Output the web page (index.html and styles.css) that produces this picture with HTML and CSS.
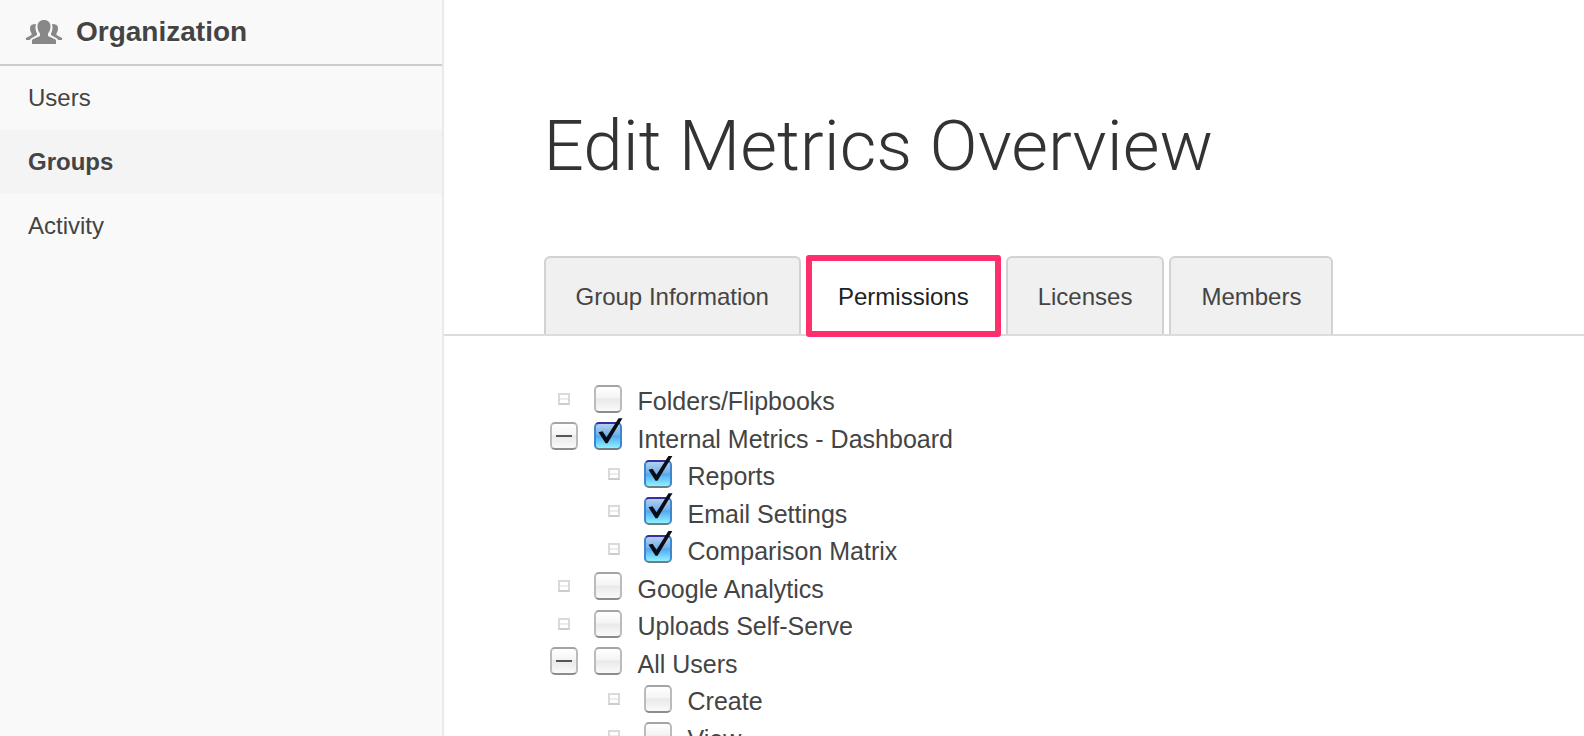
FILE: index.html
```html
<!DOCTYPE html>
<html lang="en">
<head>
    <meta charset="UTF-8">
    <meta name="viewport" content="width=device-width, initial-scale=1.0">
    <title>Edit Metrics Overview</title>
    <link rel="stylesheet" href="styles.css">
</head>
<body>
    <div class="layout">
        <!-- Sidebar -->
        <aside class="sidebar">
            <h2 class="sidebar-title">
                <svg class="sidebar-icon" viewBox="0 0 36 24" aria-hidden="true">
                    <path d="M18 0c4 0 6.500 2.600 6.500 6.500 0 3.500-1.300 5.500-2.500 7v2.500l7 3.200c.7.400 1 .9 1 1.800v3H6v-3c0-.9.300-1.400 1-1.800l7-3.200v-2.500c-1.200-1.500-2.500-3.500-2.500-7C11.500 2.600 14 0 18 0z"/>
                    <path d="M10 4c-1 3-.6 6.500 1 9.500v1.500L5 18.500l-1.500 1.500H0v-2L5.500 15v-2C4.500 12 4 10.500 4 8c0-2.600 2-4 6-4z"/>
                    <path d="M26 4c1 3 .6 6.500-1 9.500v1.500l6 3.500 1.500 1.500H36v-2L30.500 15v-2c1-1 1.500-2.500 1.500-5 0-2.600-2-4-6-4z"/>
                </svg>
                Organization
            </h2>
            <nav class="sidebar-nav">
                <a href="#users">Users</a>
                <a href="#groups" class="active">Groups</a>
                <a href="#activity">Activity</a>
            </nav>
        </aside>

        <!-- Main Content -->
        <main class="content">
            <h1>Edit Metrics Overview</h1>

            <nav class="tabs">
                <a href="#information" class="tab">Group Information</a>
                <a href="#permissions" class="tab active">Permissions</a>
                <a href="#licenses" class="tab">Licenses</a>
                <a href="#members" class="tab">Members</a>
            </nav>

            <!-- Permissions Tree -->
            <ul class="tree">
                <li>
                    <div class="row"><span class="leaf"></span><input type="checkbox" id="folders"><label for="folders">Folders/Flipbooks</label></div>
                </li>
                <li>
                    <div class="row"><button type="button" class="toggle" aria-label="Collapse Internal Metrics"></button><input type="checkbox" id="metrics" checked><label for="metrics">Internal Metrics - Dashboard</label></div>
                    <ul>
                        <li>
                            <div class="row"><span class="leaf"></span><input type="checkbox" id="reports" checked><label for="reports">Reports</label></div>
                        </li>
                        <li>
                            <div class="row"><span class="leaf"></span><input type="checkbox" id="email" checked><label for="email">Email Settings</label></div>
                        </li>
                        <li>
                            <div class="row"><span class="leaf"></span><input type="checkbox" id="matrix" checked><label for="matrix">Comparison Matrix</label></div>
                        </li>
                    </ul>
                </li>
                <li>
                    <div class="row"><span class="leaf"></span><input type="checkbox" id="analytics"><label for="analytics">Google Analytics</label></div>
                </li>
                <li>
                    <div class="row"><span class="leaf"></span><input type="checkbox" id="uploads"><label for="uploads">Uploads Self-Serve</label></div>
                </li>
                <li>
                    <div class="row"><button type="button" class="toggle" aria-label="Collapse All Users"></button><input type="checkbox" id="all-users"><label for="all-users">All Users</label></div>
                    <ul>
                        <li>
                            <div class="row"><span class="leaf"></span><input type="checkbox" id="create"><label for="create">Create</label></div>
                        </li>
                        <li>
                            <div class="row"><span class="leaf"></span><input type="checkbox" id="view"><label for="view">View</label></div>
                        </li>
                    </ul>
                </li>
            </ul>
        </main>
    </div>
</body>
</html>
```
FILE: styles.css
```css
* {
    margin: 0;
    padding: 0;
    box-sizing: border-box;
}

body {
    background: #fff;
    color: #444;
    font-family: "Helvetica Neue", "Liberation Sans", Arial, sans-serif;
    font-size: 25px;
    line-height: 1.5;
}

a {
    color: inherit;
    text-decoration: none;
}

ul {
    list-style: none;
}

.layout {
    display: flex;
    min-height: 100vh;
}

/* Sidebar */
.sidebar {
    flex: 0 0 28%;
    background: #f9f9f9;
    border-right: 2px solid #eaeae6;
}

.sidebar-title {
    display: flex;
    align-items: center;
    gap: 14px;
    height: 66px;
    padding-left: 26px;
    border-bottom: 2px solid #ccc;
    font-size: 28px;
    text-shadow: 0 2px 0 #fff;
}

.sidebar-icon {
    width: 36px;
    height: 24px;
    fill: #888;
}

.sidebar-nav a {
    display: block;
    padding-left: 28px;
    font-size: 24px;
    line-height: 64px;
}

.sidebar-nav .active {
    background: #f4f4f4;
    font-weight: bold;
}

/* Content */
.content {
    flex: 1;
}

h1 {
    padding: 101px 0 65px 100px;
    color: #333;
    font-family: Roboto, "Liberation Sans", sans-serif;
    font-size: 71px;
    font-weight: 300;
    line-height: 90px;
}

/* Tabs */
.tabs {
    display: flex;
    gap: 5px;
    padding-left: 100px;
    border-bottom: 2px solid #dcdcdc;
    font-size: 24px;
}

.tab {
    height: 78px;
    padding: 0 30px;
    background: #f0f0f0;
    border: 2px solid #d2d2d2;
    border-bottom: none;
    border-radius: 6px 6px 0 0;
    line-height: 78px;
}

.tab.active {
    height: 82px;
    margin: -1px 0 -3px;
    padding: 0 26px;
    background: #fff;
    border: 6px solid #ff2f6d;
    border-radius: 3px;
    color: #222;
    line-height: 72px;
}

/* Permissions Tree */
.tree {
    padding: 47px 0 0 106px;
}

.tree ul {
    padding-left: 50px;
}

.row {
    display: flex;
    align-items: center;
}

.toggle,
.leaf,
.row input {
    position: relative;
    flex: none;
    margin-bottom: 6px;
    margin-right: 16px;
}

.toggle,
.row input {
    appearance: none;
    width: 28px;
    height: 28px;
    background: linear-gradient(#fff, #f4f4f4 45%, #e9e9e9 50%, #fafafa);
    border: 2px solid #bbb;
    border-top-color: #a4a4a4;
    border-bottom-color: #8c8c8c;
    border-radius: 5px;
}

.toggle::after {
    content: "";
    position: absolute;
    top: 11px;
    left: 4px;
    width: 16px;
    height: 2px;
    background: #555;
}

.leaf {
    width: 12px;
    height: 12px;
    margin-left: 8px;
    margin-right: 24px;
    background: linear-gradient(#fff 35%, #ececec 35%, #ececec 60%, #fff 60%);
    border: 2px solid #dadada;
    border-bottom-color: #ccc;
}

.row input:checked {
    background: linear-gradient(#b4cfef, #74b0ea 45%, #4fa8f0 50%, #8ff2ff);
    border-color: #3b88d0;
    border-top-color: #3530a0;
    border-bottom-color: #6b7f85;
}

.row input:checked::after {
    content: "";
    position: absolute;
    top: -6px;
    left: -2px;
    width: 30px;
    height: 28px;
    background: #0c0c14;
    clip-path: polygon(5px 14px, 9px 13px, 13px 19px, 25px 0, 29px 0, 14px 25px, 12px 25px);
}
```
